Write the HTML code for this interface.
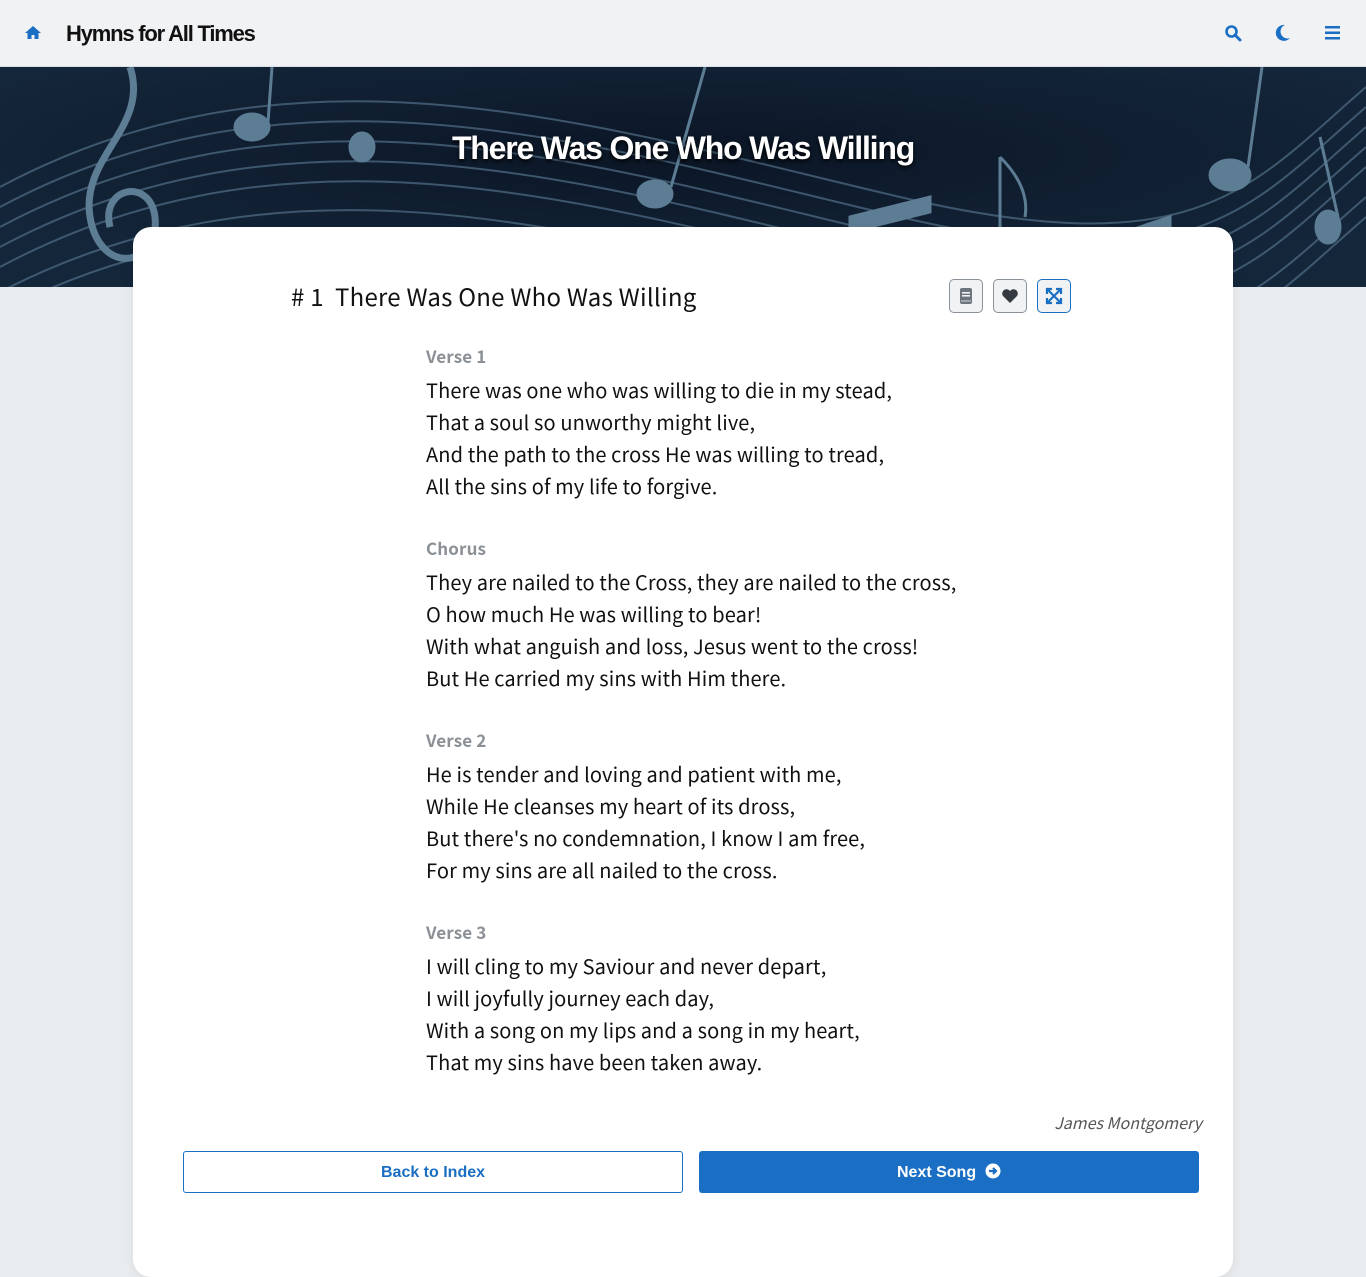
<!DOCTYPE html>
<html><head><meta charset="utf-8">
<style>
*{box-sizing:border-box;margin:0;padding:0}
body{width:1366px;height:1261px;overflow:hidden;background:#e9ecef;font-family:"Noto Sans CJK SC","Liberation Sans",sans-serif;color:#111}
.nav{height:67px;background:#f1f2f4;position:relative;border-bottom:1px solid #dde0e4}
.nav .brand{position:absolute;left:66px;top:21px;font:bold 22px "Liberation Sans",sans-serif;letter-spacing:-1.2px;color:#111}
.nav svg{position:absolute}
.hero{height:220px;background:#0d1a2a;position:relative;overflow:hidden}
.hero h1{position:absolute;left:0;right:0;top:63px;text-align:center;color:#fff;font:bold 32px "Liberation Sans",sans-serif;letter-spacing:-1.2px;text-shadow:0 2px 4px #000}
.card{position:absolute;left:133px;top:227px;width:1100px;height:1050px;background:#fff;border-radius:18px;box-shadow:0 2px 10px rgba(0,0,0,.08)}
.title{position:absolute;left:158px;top:51px;font-size:24px;letter-spacing:0.25px;font-family:"Noto Sans CJK SC","Liberation Sans",sans-serif;color:#111}
.btn{position:absolute;top:52px;width:34px;height:34px;border:1px solid #8a9097;border-radius:5px;background:#f1f2f4}
.lyr{position:absolute;left:293px;top:113px;font-size:20px;letter-spacing:0.12px;line-height:32px}
.lyr .h{color:#8a9096;font-weight:bold;font-size:17px;line-height:32px;margin-bottom:2px}
.lyr .s{margin-bottom:30px}
.auth{position:absolute;right:31px;top:883px;font-style:italic;color:#555;font-size:16px}
.b1{position:absolute;left:50px;top:924px;width:500px;height:42px;border:1px solid #1a6fc4;border-radius:3px;color:#1a6fc4;font:bold 16px "Liberation Sans",sans-serif;text-align:center;line-height:42px}
.b2{position:absolute;left:566px;top:924px;width:500px;height:42px;background:#1a6fc4;border-radius:3px;color:#fff;font:bold 16px "Liberation Sans",sans-serif;text-align:center;line-height:44px}
</style></head><body>
<div class="nav">
<svg style="left:24px;top:25px" width="18" height="15" viewBox="0 0 18 15"><path d="M9 1L1 8h2.5v6h4v-4h3v4h4V8H17z" fill="#1a6fc4"/></svg>
<div class="brand">Hymns for All Times</div>
<svg style="left:1224px;top:24px" width="18" height="18" viewBox="0 0 18 18"><circle cx="7.5" cy="7.5" r="5" stroke="#1a6fc4" stroke-width="2.6" fill="none"/><path d="M11 11l5 5" stroke="#1a6fc4" stroke-width="3" stroke-linecap="round"/></svg>
<svg style="left:1275px;top:24px" width="16" height="18" viewBox="0 0 16 18"><path d="M10 1A8 8 0 1 0 15 14A6.5 6.5 0 0 1 10 1z" fill="#1a6fc4"/></svg>
<svg style="left:1325px;top:26px" width="16" height="14" viewBox="0 0 16 14"><rect y="0" width="15" height="2.5" fill="#1a6fc4"/><rect y="5.5" width="15" height="2.5" fill="#1a6fc4"/><rect y="11" width="15" height="2.5" fill="#1a6fc4"/></svg>
</div>
<div class="hero">
<svg width="1366" height="220" style="position:absolute;left:0;top:0">
<defs><radialGradient id="g" cx="50%" cy="40%" r="60%"><stop offset="0" stop-color="#0b1626"/><stop offset="1" stop-color="#14263a"/></radialGradient></defs>
<rect width="1366" height="220" fill="url(#g)"/>
<g stroke="#4d6a82" stroke-width="2" fill="none" opacity=".75">
<path d="M0 120 C300 -40 600 60 900 130 S1250 120 1366 20"/>
<path d="M0 140 C300 -20 600 80 900 150 S1250 140 1366 40"/>
<path d="M0 160 C300 0 600 100 900 170 S1250 160 1366 60"/>
<path d="M0 180 C300 20 600 120 900 190 S1250 180 1366 80"/>
<path d="M0 200 C300 40 600 140 900 210 S1250 200 1366 100"/>
<path d="M0 225 C300 70 600 170 900 240 S1250 230 1366 130"/>
<path d="M0 245 C300 90 600 190 900 260 S1250 250 1366 150"/>
</g>
<g fill="#5d7d95" stroke="#5d7d95" stroke-width="3">
<ellipse cx="252" cy="60" rx="17" ry="13"/><line x1="268" y1="55" x2="272" y2="0"/>
<ellipse cx="362" cy="80" rx="12" ry="14"/>
<ellipse cx="655" cy="127" rx="17" ry="13"/><line x1="671" y1="120" x2="705" y2="0"/>
<ellipse cx="1230" cy="108" rx="20" ry="15"/><line x1="1248" y1="100" x2="1262" y2="0"/>
<ellipse cx="1328" cy="160" rx="12" ry="16"/><line x1="1338" y1="150" x2="1320" y2="70"/>
<path d="M850 150 L930 130 L930 145 L850 165z"/>
<path d="M1110 170 L1170 150 L1170 165 L1110 185z"/>
<line x1="1000" y1="90" x2="1000" y2="210"/><path d="M1000 90 q30 30 25 60" fill="none"/>
<path d="M130 0 C150 60 80 90 90 150 C100 210 160 200 155 150 C150 110 100 120 110 160" fill="none" stroke-width="7"/>
</g>
</svg>
<h1>There Was One Who Was Willing</h1>
</div>
<div class="card">
<div class="title"># 1&nbsp; There Was One Who Was Willing</div>
<div class="btn" style="left:816px"><svg width="32" height="32" viewBox="0 0 32 32"><rect x="10" y="8" width="12" height="16" rx="2" fill="#6c757d"/><rect x="12" y="12" width="8" height="1.6" fill="#f1f2f4"/><rect x="12" y="15" width="8" height="1.6" fill="#f1f2f4"/><rect x="11" y="20" width="10" height="2" fill="#a0a6ab"/></svg></div>
<div class="btn" style="left:860px"><svg width="32" height="32" viewBox="0 0 32 32"><path d="M16 23L9 16a4 4 0 0 1 7-5a4 4 0 0 1 7 5z" fill="#343a40"/></svg></div>
<div class="btn" style="left:904px;border-color:#1a6fc4"><svg width="32" height="32" viewBox="0 0 32 32" stroke="#1a6fc4" stroke-width="2.2" fill="none"><path d="M10 10l12 12M22 10L10 22"/><path d="M9 14V9h5M23 14V9h-5M9 18v5h5M23 18v5h-5"/></svg></div>
<div class="lyr">
<div class="s"><div class="h">Verse 1</div>There was one who was willing to die in my stead,<br>That a soul so unworthy might live,<br>And the path to the cross He was willing to tread,<br>All the sins of my life to forgive.</div>
<div class="s"><div class="h">Chorus</div>They are nailed to the Cross, they are nailed to the cross,<br>O how much He was willing to bear!<br>With what anguish and loss, Jesus went to the cross!<br>But He carried my sins with Him there.</div>
<div class="s"><div class="h">Verse 2</div>He is tender and loving and patient with me,<br>While He cleanses my heart of its dross,<br>But there's no condemnation, I know I am free,<br>For my sins are all nailed to the cross.</div>
<div class="s"><div class="h">Verse 3</div>I will cling to my Saviour and never depart,<br>I will joyfully journey each day,<br>With a song on my lips and a song in my heart,<br>That my sins have been taken away.</div>
</div>
<div class="auth">James Montgomery</div>
<div class="b1">Back to Index</div>
<div class="b2">Next Song &nbsp;<svg width="16" height="16" viewBox="0 0 16 16" style="vertical-align:-2px"><circle cx="8" cy="8" r="7.5" fill="#fff"/><path d="M4 8h6M8 5l3 3-3 3" stroke="#1a6fc4" stroke-width="2.2" fill="none"/></svg></div>
</div>
</body></html>
